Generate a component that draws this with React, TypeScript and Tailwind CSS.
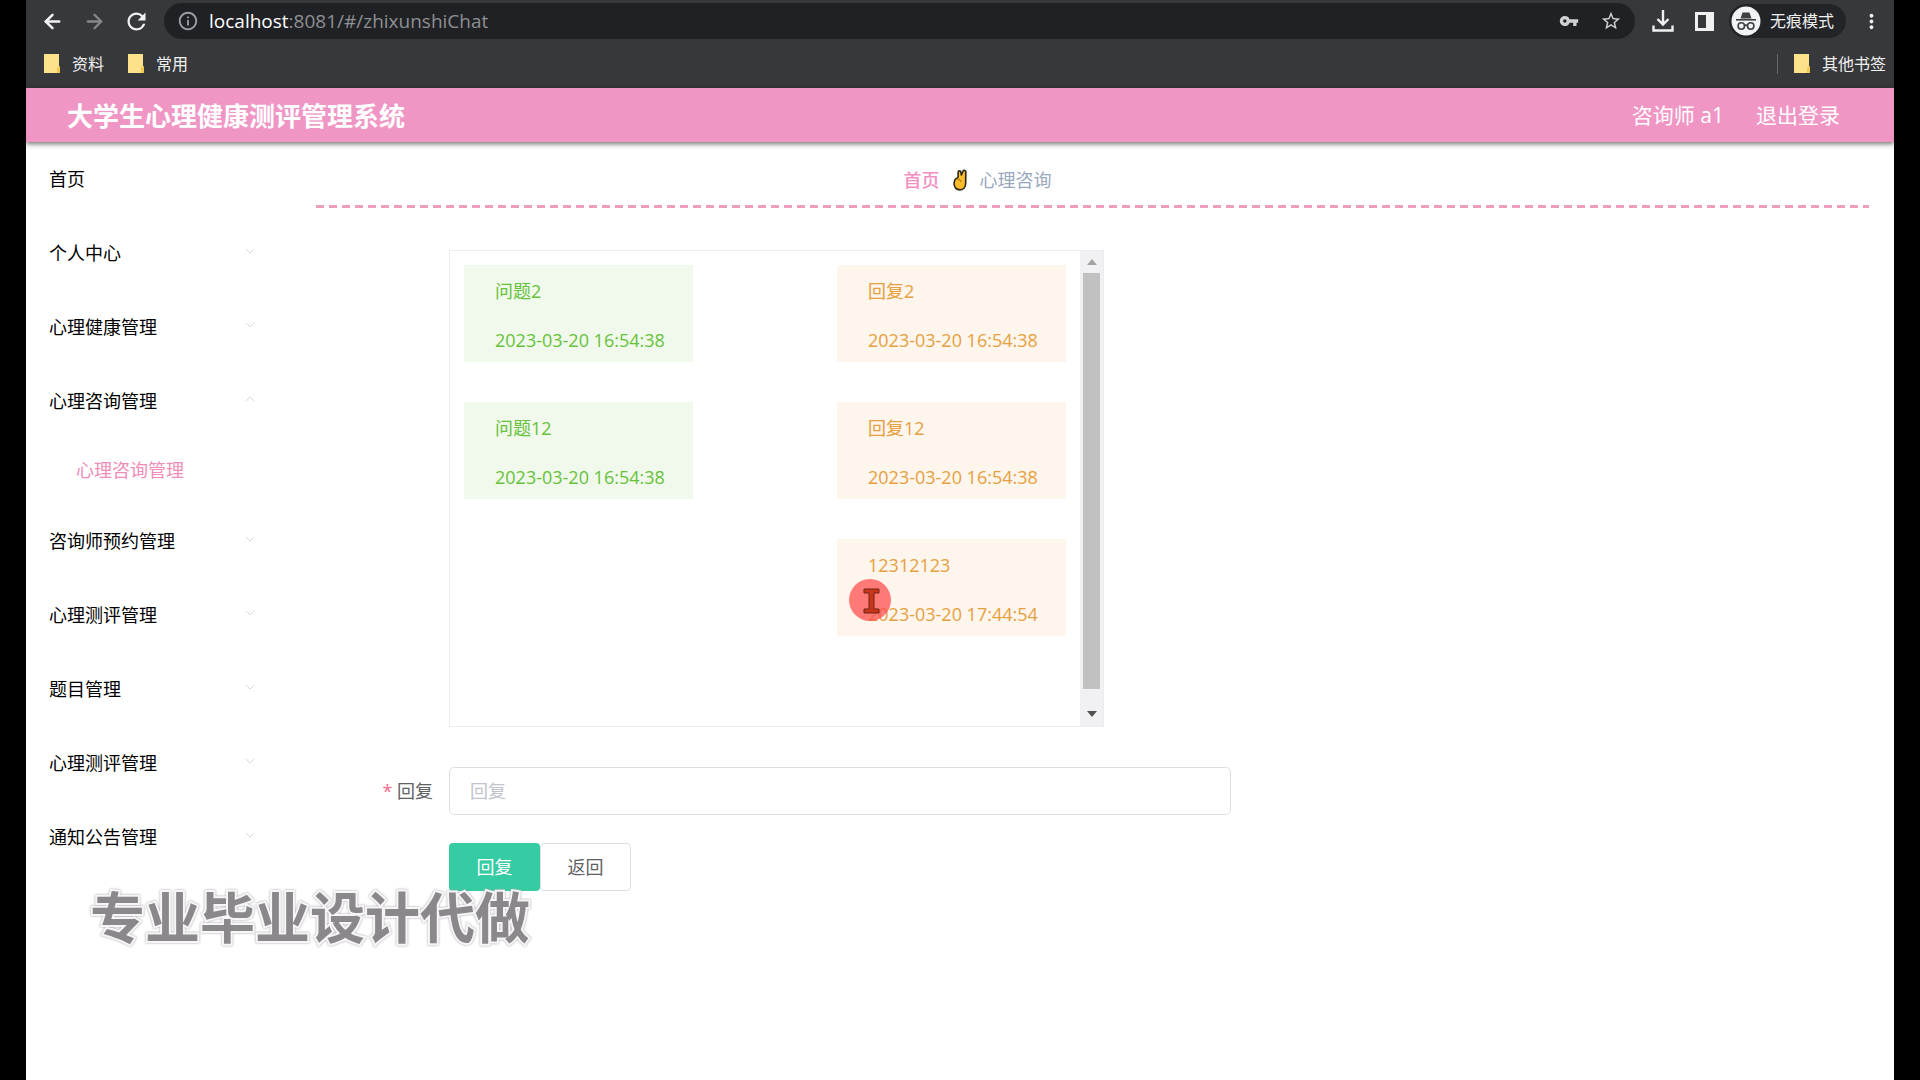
import { useState } from 'react';
import { ArrowLeft, ArrowRight, ChevronDown, ChevronUp } from 'lucide-react';
import { MdInfoOutline, MdMoreVert, MdRefresh, MdStarBorder, MdVpnKey } from 'react-icons/md';

interface MenuItem {
    id: number;
    label: string;
    children?: string[];
}

interface Message {
    text: string;
    time: string;
}

interface ChatRow {
    id: number;
    ask?: Message;
    reply?: Message;
}

const menu: MenuItem[] = [
    { id: 1, label: '个人中心', children: [] },
    { id: 2, label: '心理健康管理', children: [] },
    { id: 3, label: '心理咨询管理', children: ['心理咨询管理'] },
    { id: 4, label: '咨询师预约管理', children: [] },
    { id: 5, label: '心理测评管理', children: [] },
    { id: 6, label: '题目管理', children: [] },
    { id: 7, label: '心理测评管理', children: [] },
    { id: 8, label: '通知公告管理', children: [] },
];

const rows: ChatRow[] = [
    {
        id: 1,
        ask: { text: '问题2', time: '2023-03-20 16:54:38' },
        reply: { text: '回复2', time: '2023-03-20 16:54:38' },
    },
    {
        id: 2,
        ask: { text: '问题12', time: '2023-03-20 16:54:38' },
        reply: { text: '回复12', time: '2023-03-20 16:54:38' },
    },
    { id: 3, reply: { text: '12312123', time: '2023-03-20 17:44:54' } },
];

function FolderIcon() {
    return (
        <svg viewBox="0 0 16 19" className="w-4 h-[19px] shrink-0" aria-hidden="true">
            <path d="M0 0h15v12l1 1v6H0z" fill="#fde28c" />
            <path d="M13 19v-5l2-2 1 1v6z" fill="#f2c94f" />
        </svg>
    );
}

function DownloadIcon() {
    return (
        <svg viewBox="0 0 22 22" className="w-[22px] h-[22px]" fill="none" stroke="#f1f1f1" strokeWidth="2.4" aria-hidden="true">
            <path d="M11 0v14M5.5 9l5.5 5.5L16.5 9" />
            <path d="M1.5 15.5v5h19v-5" />
        </svg>
    );
}

function IncognitoIcon() {
    return (
        <svg viewBox="0 0 30 30" className="w-[30px] h-[30px]" aria-hidden="true">
            <circle cx="15" cy="15" r="14.5" fill="#f1f3f4" />
            <path d="M9.5 12.5 11.5 6.5h7l2 6z" fill="#3c4043" />
            <path d="M5 13.8h20" stroke="#3c4043" strokeWidth="1.6" />
            <g fill="none" stroke="#3c4043" strokeWidth="1.6">
                <circle cx="10.3" cy="20" r="3.2" />
                <circle cx="19.7" cy="20" r="3.2" />
                <path d="M13.5 19.6q1.5-1 3 0" />
            </g>
        </svg>
    );
}

function HandIcon() {
    return (
        <svg viewBox="0 0 14 22" className="w-[14px] h-[22px]" aria-hidden="true">
            <path
                d="M5 8.500 5.200 3q.2-1.300 1.400-1.100 1 .1 1.200 1.300L8.400 6 10 2.200q.6-1.200 1.800-.8 1.100.3 1 1.600L12.700 14c0 4.200-2.300 6.900-5.700 6.900-3.700 0-5.900-2.600-5.900-6.100C1.100 11.500 2.500 9.200 5 8.500z"
                fill="#fdbc2c"
                stroke="#2b2414"
                strokeWidth="1.6"
                strokeLinejoin="round"
            />
            <path d="M4.500 10.500c2 0 3.500.8 3.800 2.500" fill="none" stroke="#8a6414" strokeWidth=".9" />
        </svg>
    );
}

function PointerMark() {
    return (
        <svg viewBox="0 0 42 42" className="absolute -top-[23px] -left-[19px] w-[42px] h-[42px]" aria-hidden="true">
            <circle cx="21" cy="21" r="21" fill="#ff4d4d" fillOpacity=".74" />
            <path d="M15 10h15v4h-5v16h5v4H15v-4h5V14h-5z" fill="#c9361a" stroke="#6d2416" strokeWidth="1" />
        </svg>
    );
}

function BrowserBar() {
    return (
        <div className="bg-[#37383b] text-[#f1f1f1]">
            <div className="flex items-center h-[42px] pl-[15px] pr-[11px]">
                <button aria-label="后退" className="w-[42px]">
                    <ArrowLeft className="w-[23px] h-[23px]" strokeWidth={2.6} />
                </button>
                <button aria-label="前进" className="w-[40px] text-[#86878a]">
                    <ArrowRight className="w-[23px] h-[23px]" strokeWidth={2.4} />
                </button>
                <button aria-label="刷新" className="w-[41px]">
                    <MdRefresh className="w-[27px] h-[27px]" />
                </button>
                <div className="flex-1 flex items-center h-9 rounded-full bg-[#202124] px-[13px]">
                    <MdInfoOutline className="w-[22px] h-[22px] text-[#9aa0a6]" />
                    <span className="flex-1 pl-[10px] text-[19px] leading-6 text-[#8d8f93]">
                        <span className="text-white">localhost</span>:8081/#/zhixunshiChat
                    </span>
                    <MdVpnKey className="w-5 h-5 mr-[21px] text-[#d0d1d3]" />
                    <MdStarBorder className="w-[22px] h-[22px] text-[#d0d1d3]" />
                </div>
                <button aria-label="下载" className="ml-[17px]">
                    <DownloadIcon />
                </button>
                <button aria-label="侧边栏" className="ml-[21px] w-[19px] h-[19px] border-[3px] border-r-8 border-[#f1f1f1]" />
                <div className="flex items-center gap-[9px] h-[34px] rounded-full bg-[#232427] ml-[15px] pl-[2px] pr-3 text-base">
                    <IncognitoIcon />
                    无痕模式
                </div>
                <button aria-label="更多" className="ml-[14px]">
                    <MdMoreVert className="w-[23px] h-[23px]" />
                </button>
            </div>
            <div className="flex items-center h-[46px] pb-[3px] pl-[18px] pr-2 text-base">
                <a href="#ziliao" className="flex items-center gap-3">
                    <FolderIcon />
                    资料
                </a>
                <a href="#changyong" className="flex items-center gap-3 ml-6">
                    <FolderIcon />
                    常用
                </a>
                <a href="#other" className="flex items-center gap-3 ml-auto">
                    <span className="w-px h-5 bg-[#66676a] mr-1" />
                    <FolderIcon />
                    其他书签
                </a>
            </div>
        </div>
    );
}

function Sidebar() {
    const [open, setOpen] = useState(3);

    return (
        <nav className="w-[264px] shrink-0 text-lg text-black">
            <a href="#home" className="flex items-center h-[74px] pl-[23px]">
                首页
            </a>
            {menu.map((item) => (
                <div key={item.id}>
                    <button
                        onClick={() => setOpen(open === item.id ? 0 : item.id)}
                        className="w-full flex items-center justify-between h-[74px] pl-[23px] pr-8"
                    >
                        {item.label}
                        {open === item.id ? (
                            <ChevronUp className="w-4 h-4 mb-1 text-[#d8d8e0]" strokeWidth={1.5} />
                        ) : (
                            <ChevronDown className="w-4 h-4 mb-1 text-[#d8d8e0]" strokeWidth={1.5} />
                        )}
                    </button>
                    {open === item.id &&
                        item.children?.map((child) => (
                            <a key={child} href="#consult" className="flex items-center h-[66px] pb-[2px] pl-[50px] text-[#f08cb8]">
                                {child}
                            </a>
                        ))}
                </div>
            ))}
        </nav>
    );
}

function Bubble({ message, kind, marked }: { message: Message; kind: 'ask' | 'reply'; marked?: boolean }) {
    const color = kind === 'ask' ? 'bg-[#f0f9eb] text-[#67c23a]' : 'ml-auto bg-[#fef5ec] text-[#e6a040]';
    return (
        <div className={`w-[229px] h-[97px] pl-[31px] pt-[14px] ${color}`}>
            <p className="leading-6">{message.text}</p>
            <div className="relative mt-[25px]">
                <p className="leading-6 whitespace-nowrap">{message.time}</p>
                {marked && <PointerMark />}
            </div>
        </div>
    );
}

function ChatPanel() {
    return (
        <div className="flex w-[655px] h-[477px] border border-[#ebebf0] text-lg">
            <div className="flex-1 flex flex-col gap-10 p-[14px]">
                {rows.map((row) => (
                    <div key={row.id} className="flex justify-between">
                        {row.ask && <Bubble message={row.ask} kind="ask" />}
                        {row.reply && <Bubble message={row.reply} kind="reply" marked={row.id === 3} />}
                    </div>
                ))}
            </div>
            <div className="flex flex-col items-center w-[23px] bg-[#f1f1f4]">
                <svg viewBox="0 0 10 6" className="w-[10px] h-[6px] my-2" aria-hidden="true">
                    <path d="M0 6 5 0l5 6z" fill="#a3a3a3" />
                </svg>
                <div className="w-[17px] h-[416px] bg-[#c1c1c1]" />
                <svg viewBox="0 0 10 6" className="w-[10px] h-[6px] mt-auto mb-[9px]" aria-hidden="true">
                    <path d="M0 0h10L5 6z" fill="#505050" />
                </svg>
            </div>
        </div>
    );
}

function ReplyForm() {
    const [content, setContent] = useState('');

    return (
        <form onSubmit={(e) => e.preventDefault()} className="text-lg">
            <div className="flex items-center mt-10">
                <label htmlFor="reply" className="w-[133px] pr-4 text-right text-[#606266]">
                    <span className="text-[#f56c8c]">*</span> 回复
                </label>
                <input
                    id="reply"
                    type="text"
                    placeholder="回复"
                    value={content}
                    onChange={(e) => setContent(e.target.value)}
                    className="w-[782px] h-12 px-5 border border-[#dcdfe6] rounded-[5px] bg-white placeholder:text-[#c0c4cc] focus:outline-none"
                />
            </div>
            <div className="flex mt-7 pl-[133px]">
                <button type="submit" className="w-[91px] h-12 rounded-[4px] bg-[#35cba3] text-white">
                    回复
                </button>
                <button type="button" className="w-[91px] h-12 rounded-[4px] border border-[#dcdfe6] bg-white text-[#606266]">
                    返回
                </button>
            </div>
        </form>
    );
}

export default function App() {
    return (
        <div className="min-h-screen flex bg-black px-[26px] font-['Open_Sans','Noto_Sans_CJK_SC',sans-serif]">
            <div className="relative flex-1 flex flex-col bg-white">
                <BrowserBar />
                <header className="flex items-center justify-between h-[54px] pl-[41px] pr-[54px] bg-[#f096c5] text-white shadow-[0_2px_5px_rgba(0,0,0,0.55)]">
                    <h1 className="pt-[2px] text-[26px] leading-8 font-bold">大学生心理健康测评管理系统</h1>
                    <div className="flex gap-8 text-[21px] leading-7">
                        <span>咨询师 a1</span>
                        <a href="#logout">退出登录</a>
                    </div>
                </header>

                <div className="flex-1 flex">
                    <Sidebar />
                    <main className="flex-1 pl-[26px] pr-[25px]">
                        <div className="flex items-center justify-center gap-[13px] h-[63px] pt-3 pr-[230px] text-lg">
                            <a href="#home" className="font-medium text-[#f48ec2]">
                                首页
                            </a>
                            <HandIcon />
                            <span className="text-[#97a8be]">心理咨询</span>
                        </div>
                        <div className="h-[3px] bg-[repeating-linear-gradient(90deg,#ee9dbd_0px,#ee9dbd_8px,transparent_8px,transparent_13px)]" />
                        <div className="pl-[133px] pt-[42px]">
                            <ChatPanel />
                        </div>
                        <ReplyForm />
                    </main>
                </div>

                <div className="absolute top-[882px] left-[64px] text-[55px] leading-[70px] font-bold text-[#8a888a] whitespace-nowrap pointer-events-none [paint-order:stroke_fill] [-webkit-text-stroke:4px_#f7f5f8] [filter:drop-shadow(0_0_1px_#a5a3a6)]">
                    专业毕业设计代做
                </div>
            </div>
        </div>
    );
}
